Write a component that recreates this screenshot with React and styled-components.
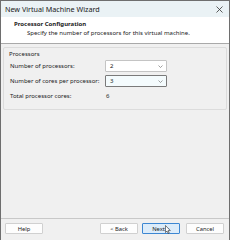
import React from 'react';
import styled, { createGlobalStyle } from 'styled-components';

const GlobalStyle = createGlobalStyle`
    html, body {
        margin: 0;
        padding: 0;
        background: #ffffff;
    }
    body {
        font-family: "Noto Sans", "Open Sans", sans-serif;
        font-size: 6px;
        color: #1a1a1a;
    }
`;

const Window = styled.div`
    box-sizing: border-box;
    width: 230px;
    height: 240px;
    border: 1px solid #6e6e6e;
    border-bottom: none;
    display: flex;
    flex-direction: column;
    background: #f0f0f0;
    overflow: hidden;
`;

const TitleBar = styled.div`
    height: 16px;
    display: flex;
    align-items: center;
    justify-content: space-between;
    padding: 0 6px 0 4px;
    background: #eaf2f5;
    font-size: 7.2px;
    color: #202020;
`;

const CloseIcon = styled.svg`
    width: 7px;
    height: 7px;
`;

const Header = styled.div`
    height: 27px;
    background: #ffffff;
    border-bottom: 1px solid #a9a9a9;
    padding: 4px 0 0 13px;
    box-sizing: border-box;
    display: flex;
    flex-direction: column;
    gap: 2px;
`;

const HeaderTitle = styled.div`
    font-weight: 700;
    line-height: 7px;
`;

const HeaderText = styled.div`
    padding-left: 13px;
    line-height: 7px;
`;

const Content = styled.div`
    flex: 1;
    padding: 3px 2px 0 2px;
`;

const GroupBox = styled.div`
    border: 1px solid #dcdcdc;
    border-radius: 2px;
    padding: 2px 0 4px 5px;
    display: flex;
    flex-direction: column;
`;

const GroupLabel = styled.div`
    line-height: 8px;
    margin-bottom: 2px;
`;

const Row = styled.div`
    display: grid;
    grid-template-columns: 95px 62px;
    align-items: center;
    height: 12px;
    margin: 0 0 3px 1px;
`;

const Combo = styled.div`
    box-sizing: border-box;
    height: 12px;
    display: flex;
    align-items: center;
    justify-content: space-between;
    padding: 0 3px 0 3px;
    background: ${(p) => (p.focused ? '#f4fbfd' : '#ffffff')};
    border: 1px solid ${(p) => (p.focused ? '#7a7a7a' : '#c4c4c4')};
    border-radius: 1px;
`;

const Chevron = styled.svg`
    width: 5px;
    height: 3px;
`;

const Value = styled.span`
    padding-left: 1px;
`;

const Footer = styled.div`
    border-top: 1px solid #c8c8c8;
    height: 17px;
    display: flex;
    align-items: flex-start;
    padding: 4px 5px 0 4px;
    gap: 4px;
`;

const Button = styled.div`
    position: relative;
    box-sizing: border-box;
    width: 38px;
    height: 11px;
    display: flex;
    align-items: center;
    justify-content: center;
    background: ${(p) => (p.primary ? '#dcecfa' : '#fdfdfd')};
    border: 1px solid ${(p) => (p.primary ? '#3d87d2' : '#d0d0d0')};
    border-radius: 1px;
    font-size: 5.8px;
    margin-left: ${(p) => p.gapBefore || 0}px;
`;

const Cursor = styled.svg`
    position: absolute;
    left: 22px;
    top: 1px;
    width: 6px;
    height: 9px;
`;

const ChevronDown = () => (
    <Chevron viewBox="0 0 5 3">
        <path d="M0.5 0.5 L2.5 2.5 L4.5 0.5" fill="none" stroke="#777" strokeWidth="0.7" />
    </Chevron>
);

const App = () => {
    return (<>
        <GlobalStyle />
        <Window>
            <TitleBar>
                <span>New Virtual Machine Wizard</span>
                <CloseIcon viewBox="0 0 7 7">
                    <path d="M0.5 0.5 L6.5 6.5 M6.5 0.5 L0.5 6.5" stroke="#333" strokeWidth="0.8" />
                </CloseIcon>
            </TitleBar>
            <Header>
                <HeaderTitle>Processor Configuration</HeaderTitle>
                <HeaderText>Specify the number of processors for this virtual machine.</HeaderText>
            </Header>
            <Content>
                <GroupBox>
                    <GroupLabel>Processors</GroupLabel>
                    <Row>
                        <span>Number of processors:</span>
                        <Combo>
                            <Value>2</Value>
                            <ChevronDown />
                        </Combo>
                    </Row>
                    <Row>
                        <span>Number of cores per processor:</span>
                        <Combo focused>
                            <Value>3</Value>
                            <ChevronDown />
                        </Combo>
                    </Row>
                    <Row>
                        <span>Total processor cores:</span>
                        <Value>6</Value>
                    </Row>
                </GroupBox>
            </Content>
            <Footer>
                <Button>Help</Button>
                <Button gapBefore={53}>&lt; Back</Button>
                <Button primary>
                    Next &gt;
                    <Cursor viewBox="0 0 6 9">
                        <path d="M0.5 0.5 L0.5 7.5 L2 6 L3.2 8.5 L4.2 8 L3 5.6 L5.3 5.6 Z" fill="#fff" stroke="#000" strokeWidth="0.5" />
                    </Cursor>
                </Button>
                <Button gapBefore={2}>Cancel</Button>
            </Footer>
        </Window>
    </>);
};

export default App;
